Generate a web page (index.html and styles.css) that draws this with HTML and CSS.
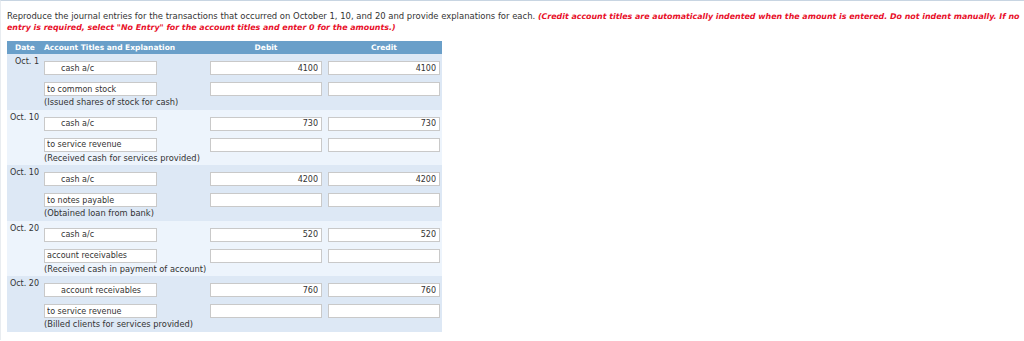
FILE: index.html
```html
<!DOCTYPE html>
<html>
<head>
<meta charset="utf-8">
<link rel="stylesheet" href="styles.css">
</head>
<body>
<div class="page">
  <p class="instr">Reproduce the journal entries for the transactions that occurred on October 1, 10, and 20 and provide explanations for each. <em class="warn">(Credit account titles are automatically indented when the amount is entered. Do not indent manually. If no<br>entry is required, select "No Entry" for the account titles and enter 0 for the amounts.)</em></p>

  <div class="journal">
    <div class="head">
      <div class="h-date">Date</div>
      <div class="h-acct">Account Titles and Explanation</div>
      <div class="h-amt">Debit</div>
      <div class="h-amt h-credit">Credit</div>
    </div>

    <div class="entry odd">
      <div class="date">Oct. 1</div>
      <div class="lines">
        <div class="line"><input class="acct indent" value="cash a/c" readonly><input class="amt" value="4100" readonly><input class="amt credit" value="4100" readonly></div>
        <div class="line"><input class="acct" value="to common stock" readonly><input class="amt" value="" readonly><input class="amt credit" value="" readonly></div>
        <div class="expl">(Issued shares of stock for cash)</div>
      </div>
    </div>

    <div class="entry even">
      <div class="date">Oct. 10</div>
      <div class="lines">
        <div class="line"><input class="acct indent" value="cash a/c" readonly><input class="amt" value="730" readonly><input class="amt credit" value="730" readonly></div>
        <div class="line"><input class="acct" value="to service revenue" readonly><input class="amt" value="" readonly><input class="amt credit" value="" readonly></div>
        <div class="expl">(Received cash for services provided)</div>
      </div>
    </div>

    <div class="entry odd">
      <div class="date">Oct. 10</div>
      <div class="lines">
        <div class="line"><input class="acct indent" value="cash a/c" readonly><input class="amt" value="4200" readonly><input class="amt credit" value="4200" readonly></div>
        <div class="line"><input class="acct" value="to notes payable" readonly><input class="amt" value="" readonly><input class="amt credit" value="" readonly></div>
        <div class="expl">(Obtained loan from bank)</div>
      </div>
    </div>

    <div class="entry even">
      <div class="date">Oct. 20</div>
      <div class="lines">
        <div class="line"><input class="acct indent" value="cash a/c" readonly><input class="amt" value="520" readonly><input class="amt credit" value="520" readonly></div>
        <div class="line"><input class="acct" value="account receivables" readonly><input class="amt" value="" readonly><input class="amt credit" value="" readonly></div>
        <div class="expl">(Received cash in payment of account)</div>
      </div>
    </div>

    <div class="entry odd">
      <div class="date">Oct. 20</div>
      <div class="lines">
        <div class="line"><input class="acct indent" value="account receivables" readonly><input class="amt" value="760" readonly><input class="amt credit" value="760" readonly></div>
        <div class="line"><input class="acct" value="to service revenue" readonly><input class="amt" value="" readonly><input class="amt credit" value="" readonly></div>
        <div class="expl">(Billed clients for services provided)</div>
      </div>
    </div>
  </div>
</div>
</body>
</html>
```

FILE: styles.css
```css
html, body {
  margin: 0;
  padding: 0;
  background: #ffffff;
}

.page {
  font-family: "DejaVu Sans", Verdana, sans-serif;
  font-size: 8px;
  color: #333333;
  border-top: 1px solid #c8d5e2;
  border-left: 1px solid #e8ecf0;
  min-height: 340px;
  box-sizing: border-box;
  padding: 10px 0 0 6px;
  overflow: hidden;
}

.instr {
  margin: 0 0 10px 0;
  height: 20px;
  font-size: 8.45px;
  line-height: 10px;
  white-space: nowrap;
}

.warn {
  color: #e8102a;
  font-weight: bold;
  font-style: italic;
  font-size: 7.9px;
}

.journal {
  width: 435px;
}

.head {
  display: flex;
  align-items: center;
  height: 13px;
  background: #6a9fc9;
  color: #ffffff;
  font-weight: bold;
  font-size: 7.5px;
}

.h-date {
  width: 29px;
  padding-left: 8px;
}

.h-acct {
  width: 166px;
}

.h-amt {
  width: 112px;
  text-align: center;
}

.h-credit {
  margin-left: 6px;
}

.entry {
  display: flex;
  align-items: flex-start;
  padding-top: 7px;
}

.entry.odd {
  background: #dde8f5;
}

.entry.even {
  background: #edf4fc;
}

.date {
  width: 32px;
  padding-right: 5px;
  margin-top: -4px;
  text-align: right;
  line-height: 10px;
}

.lines {
  display: flex;
  flex-direction: column;
  gap: 7px;
}

.line {
  display: flex;
}

input {
  box-sizing: border-box;
  height: 14px;
  margin: 0;
  padding: 0 3px 0 2px;
  border: 1px solid #c9c9c9;
  background: #ffffff;
  font-family: "DejaVu Sans", Verdana, sans-serif;
  font-size: 8px;
  color: #333333;
  outline: none;
}

.acct {
  width: 113px;
  margin-right: 53px;
}

.acct.indent {
  padding-left: 16px;
}

.amt {
  width: 112px;
  text-align: right;
}

.amt.credit {
  margin-left: 6px;
}

.expl {
  margin-top: -7px;
  font-size: 8.3px;
  line-height: 13.6px;
}
```
